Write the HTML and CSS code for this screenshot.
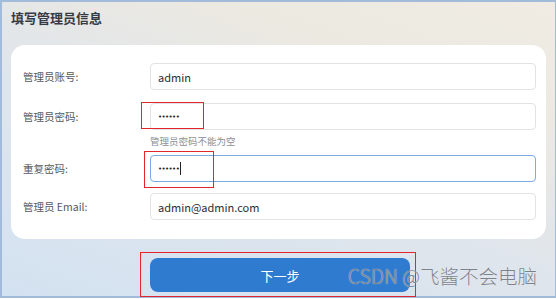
FILE: index.html
```html
<!DOCTYPE html>
<html lang="zh">
<head>
<meta charset="utf-8">
<link rel="stylesheet" href="styles.css">
</head>
<body>
<div class="frame">
  <h1 class="title">填写管理员信息</h1>
  <div class="card">
    <div class="row">
      <label class="label">管理员账号:</label>
      <div class="input">admin</div>
    </div>
    <div class="row row-pw">
      <label class="label">管理员密码:</label>
      <div class="input"><span class="dots">••••••</span></div>
    </div>
    <div class="hint">管理员密码不能为空</div>
    <div class="row row-repeat">
      <label class="label">重复密码:</label>
      <div class="input focused"><span class="dots">••••••</span><span class="caret"></span></div>
    </div>
    <div class="row row-email">
      <label class="label">管理员 Email:</label>
      <div class="input">admin@admin.com</div>
    </div>
  </div>
  <div class="actions">
    <button class="btn">下一步</button>
  </div>
  <div class="mark mark-1"></div>
  <div class="mark mark-2"></div>
  <div class="mark mark-3"></div>
  <div class="watermark">CSDN @飞酱不会电脑</div>
</div>
</body>
</html>
```
FILE: styles.css
```css
* { box-sizing: border-box; }
html, body { margin: 0; padding: 0; }
body {
  width: 556px;
  height: 299px;
  overflow: hidden;
  font-family: "Noto Sans CJK SC", "Noto Sans", sans-serif;
}
.frame {
  position: relative;
  width: 556px;
  height: 298px;
  border: 2px solid #a3bbdb;
  border-right-width: 1px;
  background: linear-gradient(20deg, #d3e2f1 0%, #dfe5ec 45%, #ece9e1 75%, #f0ece3 100%);
  padding: 0 0 0 9px;
}
.title {
  margin: 0;
  padding-top: 6px;
  height: 43px;
  font-size: 13px;
  font-weight: bold;
  color: #353b45;
  line-height: 20px;
}
.card {
  width: 535px;
  height: 194px;
  background: #fff;
  border-radius: 14px;
  padding: 18px 10px 0 12px;
}
.row {
  display: flex;
  align-items: center;
  height: 27px;
}
.row-pw { margin-top: 13px; }
.row-repeat { margin-top: 1px; }
.row-email { margin-top: 11px; }
.label {
  width: 127px;
  font-size: 10.5px;
  color: #555a60;
}
.input {
  width: 386px;
  height: 27px;
  border: 1.5px solid #e1e3e6;
  border-radius: 4px;
  padding-left: 7px;
  display: flex;
  align-items: center;
  font-size: 11px;
  color: #2a2d31;
}
.input.focused {
  border-color: #7eaae4;
}
.dots {
  font-size: 7px;
  letter-spacing: -0.6px;
  color: #222;
  font-family: "DejaVu Sans", sans-serif;
}
.caret {
  display: inline-block;
  width: 1px;
  height: 13px;
  background: #222;
  margin-left: 1px;
}
.hint {
  margin-left: 127px;
  height: 24px;
  padding-top: 4px;
  font-size: 9.5px;
  color: #8c8f94;
}
.actions {
  display: flex;
  justify-content: flex-start;
  padding-left: 139px;
  margin-top: 19px;
}
.btn {
  width: 260px;
  height: 34px;
  border: none;
  border-radius: 8px;
  background: #2f7bd0;
  color: #fff;
  font-family: "Noto Sans CJK SC", sans-serif;
  font-size: 13px;
  padding: 0;
}
.mark {
  position: absolute;
  border: 1.6px solid #e3262b;
}
.mark-1 { left: 139px; top: 100px; width: 63px; height: 27px; }
.mark-2 { left: 142px; top: 149px; width: 70px; height: 37px; }
.mark-3 { left: 138px; top: 250px; width: 276px; height: 45px; }
.watermark {
  position: absolute;
  left: 346px;
  top: 261px;
  font-family: "Noto Sans CJK SC", sans-serif;
  font-size: 19.5px;
  font-weight: 300;
  line-height: 26px;
  color: #7c828a;
  text-shadow: 0 0 1px rgba(255,255,255,0.9);
  white-space: nowrap;
}
```
